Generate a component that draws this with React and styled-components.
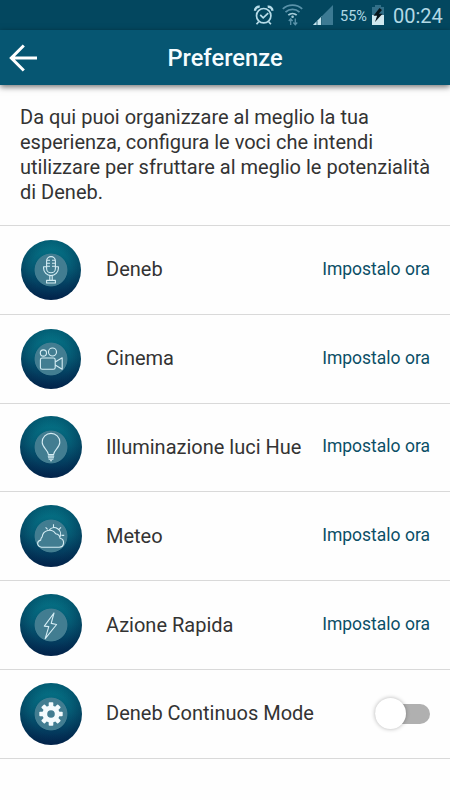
import styled, { createGlobalStyle } from "styled-components";

const rows = [
  { label: "Deneb", icon: "mic", size: 60 },
  { label: "Cinema", icon: "camera", size: 60 },
  { label: "Illuminazione luci Hue", icon: "bulb", size: 62 },
  { label: "Meteo", icon: "weather", size: 62 },
  { label: "Azione Rapida", icon: "bolt", size: 62 },
];

const icons = {
  mic: (
    <>
      <rect x="26.6" y="17.6" width="8.8" height="16.2" rx="4.4" />
      <path d="M27 21.3h3M27 24.3h3M27 27.3h3M35 21.3h-3M35 24.3h-3M35 27.3h-3" />
      <path d="M26.6 27.8h-3v1.4a7.4 7.4 0 0 0 14.8 0v-1.4h-3" />
      <path d="M29.8 36.6v4.6M32.2 36.6v4.6M26.6 44v-2.6h8.8V44z" />
    </>
  ),
  camera: (
    <>
      <circle cx="23.4" cy="25" r="3.1" />
      <circle cx="32.5" cy="24" r="4" />
      <rect x="20.4" y="30" width="14.8" height="11.2" rx="1.8" />
      <path d="M35.2 34l7-4.2v11.4l-7-4.2" />
    </>
  ),
  bulb: (
    <>
      <path d="M28.4 38.6c0-4.6-6.2-6.8-6.2-12.4a8.8 8.8 0 0 1 17.6 0c0 5.6-6.2 7.8-6.2 12.4z" />
      <path d="M27.8 40.1h6.4M28 41.7h6M28.6 43.3h4.8M30 44.7h2" />
    </>
  ),
  weather: (
    <>
      <path d="M21.5 42.2h17.7a4.5 4.5 0 0 0 .8-8.9 4.9 4.9 0 0 0-4.4-4.6 7.3 7.3 0 0 0-13.4 3.1c-1.5 1.3-1.3 2.2-1.5 3.3-3.9.9-4.5 6 .8 7.1z" />
      <path d="M29.3 24.9a6.4 6.4 0 0 1 10.6 7M33.5 19.3v3M25.6 22.3l2 2M41 22.3l-2 2M41.5 30.4h2.7" />
    </>
  ),
  bolt: <path d="M34 19L24.3 32.1l4.5.5-3.6 12 11.4-14.1-5.4-1.1z" />,
};

const RowIcon = ({ name }) => (
  <svg viewBox="0 0 62 62" fill="none" stroke="#d5edf4" strokeWidth="1.1" strokeLinejoin="round">
    {icons[name]}
  </svg>
);

const GearIcon = () => (
  <svg viewBox="0 0 62 62">
    <g fill="#f4fbfd">
      {[0, 45, 90, 135].map((angle) => (
        <rect
          key={angle}
          x="28.7"
          y="19.3"
          width="4.6"
          height="23.4"
          rx="0.8"
          transform={`rotate(${angle} 31 31)`}
        />
      ))}
      <circle cx="31" cy="31" r="8.6" />
    </g>
    <circle cx="31" cy="31" r="3.8" fill="#427d91" />
  </svg>
);

const StatusIcons = () => (
  <svg width="98" height="30" viewBox="0 0 98 30" fill="none">
    <g stroke="#b7dce8" strokeWidth="1.7">
      <circle cx="11.7" cy="15.7" r="7.2" />
      <path d="M8.2 14.9l3 3 5-4.8M6.7 21.7l-2.2 2.6M16.7 21.7l2.2 2.6" />
      <path d="M3 10.8a4 4 0 0 1 4.7-4M20.4 10.8a4 4 0 0 0-4.7-4" strokeWidth="2.4" />
    </g>
    <g stroke="#5a93aa" strokeWidth="1.8">
      <path d="M30.8 8.8a14.5 14.5 0 0 1 19.4 0" />
      <path d="M33.5 12.1a10.5 10.5 0 0 1 14 0" />
      <path d="M36.3 15.2a6.3 6.3 0 0 1 8.4 0" stroke="#a5cbd9" />
    </g>
    <circle cx="40.6" cy="16.8" r="1.3" fill="#a5cbd9" />
    <path
      d="M38.7 25v-6M36.8 21l1.9-2.3 1.9 2.3M43.3 18.5v6M41.4 22.5l1.9 2.3 1.9-2.3"
      stroke="#5a93aa"
      strokeWidth="1.3"
    />
    <path d="M61 25L81 5v20z" fill="#3c7a93" />
    <path d="M61 25l9-9v9z" fill="#c4e4ee" />
    <path d="M65 21v4M69.5 16.5V25" stroke="#03475f" strokeWidth="0.8" />
  </svg>
);

const BatteryIcon = () => (
  <svg width="14" height="22" viewBox="0 0 14 22">
    <path d="M4 1h6v2h3v8H1V3h3z" fill="#326f88" />
    <path d="M1 11h12v10H1z" fill="#d0e8ef" />
    <path d="M8.5 4L2.5 11.8h3.6L4 18l7.5-8.2H7.8L11 6z" fill="#08151b" />
  </svg>
);

const App = () => {
  return (
    <>
      <GlobalStyle />
      <StatusBar>
        <StatusIcons />
        <Battery>55%</Battery>
        <BatteryIcon />
        <Clock>00:24</Clock>
      </StatusBar>
      <Header>
        <BackButton aria-label="Indietro">
          <svg width="28" height="28" viewBox="0 0 28 28" fill="none" stroke="#fff" strokeWidth="3">
            <path d="M28 14H3M14.8 1.5L2.3 14l12.5 12.5" />
          </svg>
        </BackButton>
        <Title>Preferenze</Title>
      </Header>
      <Intro>
        Da qui puoi organizzare al meglio la tua
        <br />
        esperienza, configura le voci che intendi
        <br />
        utilizzare per sfruttare al meglio le potenzialità
        <br />
        di Deneb.
      </Intro>
      <List>
        {rows.map((row) => (
          <Row key={row.label}>
            <IconSlot>
              <IconCircle $size={row.size}>
                <RowIcon name={row.icon} />
              </IconCircle>
            </IconSlot>
            <Label>{row.label}</Label>
            <SetLink href="#!">Impostalo ora</SetLink>
          </Row>
        ))}
        <Row>
          <IconSlot>
            <IconCircle $size={62}>
              <GearIcon />
            </IconCircle>
          </IconSlot>
          <Label>Deneb Continuos Mode</Label>
          <Toggle role="switch" aria-checked="false">
            <Knob />
          </Toggle>
        </Row>
      </List>
    </>
  );
};

export default App;

const GlobalStyle = createGlobalStyle`
  * {
    box-sizing: border-box;
  }

  body {
    margin: 0;
    background: #fefefe;
    color: #333;
    font-family: Roboto, sans-serif;
  }
`;

const StatusBar = styled.div`
  display: flex;
  align-items: center;
  height: 30px;
  padding-left: 252px;
  background: #03475f;
  color: #b2d9e5;

  svg {
    flex: none;
  }
`;

const Battery = styled.span`
  width: 27px;
  margin: 2px 0 0 -10px;
  font-size: 14.5px;
  white-space: nowrap;

  & + svg {
    margin: 0 0 0 4px;
  }
`;

const Clock = styled.span`
  margin: 2px 0 0 8px;
  font-size: 20px;
  white-space: nowrap;
`;

const Header = styled.header`
  display: grid;
  grid-template-columns: 60px 1fr 60px;
  align-items: center;
  height: 55px;
  background: #065672;
  box-shadow: 0 2px 6px rgba(0, 0, 0, 0.55);
`;

const BackButton = styled.button`
  display: flex;
  padding: 0 0 0 9px;
  border: none;
  background: none;
`;

const Title = styled.h1`
  margin: 0;
  color: #f5fcff;
  font-size: 23.7px;
  font-weight: 500;
  line-height: 28px;
  text-align: center;
`;

const Intro = styled.p`
  height: 140px;
  margin: 0;
  padding: 20px 0 0 20px;
  font-size: 20px;
  line-height: 25px;
  white-space: nowrap;
`;

const List = styled.div`
  border-top: 1px solid #d9d9d9;
`;

const Row = styled.div`
  display: flex;
  align-items: center;
  height: 88.8px;
  padding: 0 20px;
  border-bottom: 1px solid #d9d9d9;
`;

const IconSlot = styled.div`
  display: flex;
  justify-content: center;
  width: 62px;
  margin-right: 24px;
`;

const IconCircle = styled.div`
  display: flex;
  align-items: center;
  justify-content: center;
  width: ${({ $size }) => $size}px;
  height: ${({ $size }) => $size}px;
  border-radius: 50%;
  background:
    radial-gradient(circle, #427d91 16px, transparent 16.8px),
    radial-gradient(circle, transparent 20px, rgba(0, 25, 60, 0.3) 31px),
    linear-gradient(180deg, #04788a 0%, #055872 48%, #02264f 100%);

  svg {
    flex: none;
    width: 62px;
    height: 62px;
  }
`;

const Label = styled.span`
  flex: 1;
  padding-bottom: 1px;
  font-size: 20px;
  line-height: 24px;
  white-space: nowrap;
`;

const SetLink = styled.a`
  padding-bottom: 2px;
  color: #0b4f66;
  font-size: 17.5px;
  line-height: 22px;
  text-decoration: none;
  white-space: nowrap;
`;

const Toggle = styled.div`
  display: flex;
  align-items: center;
  width: 55px;
  height: 20px;
  border-radius: 10px;
  background: #b0b0b0;
`;

const Knob = styled.div`
  width: 31px;
  height: 31px;
  border-radius: 50%;
  background: #fff;
  box-shadow: 0 0 4px rgba(0, 0, 0, 0.3);
`;
